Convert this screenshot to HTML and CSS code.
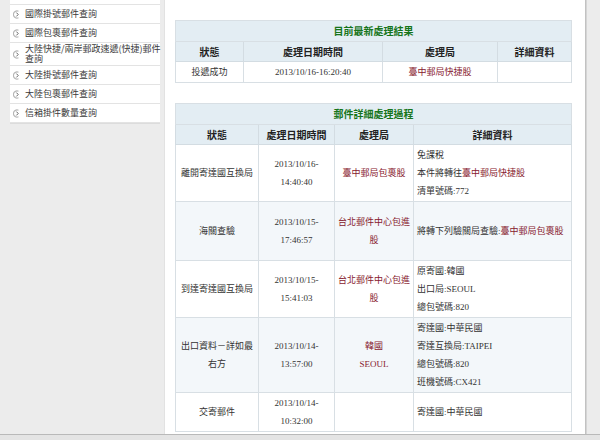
FILE: index.html
```html
<!DOCTYPE html>
<html lang="zh-Hant">
<head>
    <meta charset="UTF-8">
    <title>郵件處理過程查詢</title>
    <link rel="stylesheet" href="styles.css">
</head>
<body>
    <div class="page">
        <div class="side">
            <ul class="menu">
                <li><svg viewBox="0 0 8 9"><path class="ring" d="M5.5 1.2 A3.6 3.6 0 1 0 5.5 7.8"/><path class="tip" d="M3.4 2.6 L5.2 4.5 L3.4 6.4"/></svg><span>國際快捷郵件查詢</span></li>
                <li><svg viewBox="0 0 8 9"><path class="ring" d="M5.5 1.2 A3.6 3.6 0 1 0 5.5 7.8"/><path class="tip" d="M3.4 2.6 L5.2 4.5 L3.4 6.4"/></svg><span>國際掛號郵件查詢</span></li>
                <li><svg viewBox="0 0 8 9"><path class="ring" d="M5.5 1.2 A3.6 3.6 0 1 0 5.5 7.8"/><path class="tip" d="M3.4 2.6 L5.2 4.5 L3.4 6.4"/></svg><span>國際包裹郵件查詢</span></li>
                <li><svg viewBox="0 0 8 9"><path class="ring" d="M5.5 1.2 A3.6 3.6 0 1 0 5.5 7.8"/><path class="tip" d="M3.4 2.6 L5.2 4.5 L3.4 6.4"/></svg><span>大陸快捷/兩岸郵政速遞(快捷)郵件查詢</span></li>
                <li><svg viewBox="0 0 8 9"><path class="ring" d="M5.5 1.2 A3.6 3.6 0 1 0 5.5 7.8"/><path class="tip" d="M3.4 2.6 L5.2 4.5 L3.4 6.4"/></svg><span>大陸掛號郵件查詢</span></li>
                <li><svg viewBox="0 0 8 9"><path class="ring" d="M5.5 1.2 A3.6 3.6 0 1 0 5.5 7.8"/><path class="tip" d="M3.4 2.6 L5.2 4.5 L3.4 6.4"/></svg><span>大陸包裹郵件查詢</span></li>
                <li><svg viewBox="0 0 8 9"><path class="ring" d="M5.5 1.2 A3.6 3.6 0 1 0 5.5 7.8"/><path class="tip" d="M3.4 2.6 L5.2 4.5 L3.4 6.4"/></svg><span>信箱掛件數量查詢</span></li>
            </ul>
        </div>

        <div class="main">
            <table class="track">
                <colgroup>
                    <col style="width: 68px">
                    <col style="width: 139px">
                    <col style="width: 115px">
                    <col style="width: 74px">
                </colgroup>
                <tr><td colspan="4" class="caption">目前最新處理結果</td></tr>
                <tr><th>狀態</th><th>處理日期時間</th><th>處理局</th><th>詳細資料</th></tr>
                <tr>
                    <td>投遞成功</td>
                    <td>2013/10/16-16:20:40</td>
                    <td class="office">臺中郵局快捷股</td>
                    <td></td>
                </tr>
            </table>

            <table class="track history">
                <colgroup>
                    <col style="width: 83px">
                    <col style="width: 76px">
                    <col style="width: 79px">
                    <col style="width: 158px">
                </colgroup>
                <tr><td colspan="4" class="caption">郵件詳細處理過程</td></tr>
                <tr><th>狀態</th><th>處理日期時間</th><th>處理局</th><th>詳細資料</th></tr>
                <tr>
                    <td>離開寄達國互換局</td>
                    <td>2013/10/16-<br>14:40:40</td>
                    <td class="office">臺中郵局包裹股</td>
                    <td class="detail">免課稅<br>本件將轉往<span class="office">臺中郵局快捷股</span><br>清單號碼:772</td>
                </tr>
                <tr class="alt">
                    <td>海關查驗</td>
                    <td>2013/10/15-<br>17:46:57</td>
                    <td class="office">台北郵件中心包進股</td>
                    <td class="detail spaced">將轉下列驗關局查驗:<span class="office">臺中郵局包裹股</span></td>
                </tr>
                <tr>
                    <td>到達寄達國互換局</td>
                    <td>2013/10/15-<br>15:41:03</td>
                    <td class="office">台北郵件中心包進股</td>
                    <td class="detail">原寄國:韓國<br>出口局:SEOUL<br>總包號碼:820</td>
                </tr>
                <tr class="alt">
                    <td>出口資料－詳如最右方</td>
                    <td>2013/10/14-<br>13:57:00</td>
                    <td class="office">韓國<br>SEOUL</td>
                    <td class="detail">寄達國:中華民國<br>寄達互換局:TAIPEI<br>總包號碼:820<br>班機號碼:CX421</td>
                </tr>
                <tr>
                    <td>交寄郵件</td>
                    <td>2013/10/14-<br>10:32:00</td>
                    <td></td>
                    <td class="detail">寄達國:中華民國</td>
                </tr>
            </table>
        </div>
    </div>
</body>
</html>
```

FILE: styles.css
```css
body {
    margin: 0;
    background-color: #e4e4e4;
    font-family: "Liberation Serif", "Noto Sans CJK TC", serif;
    font-size: 9px;
    color: #333;
    overflow: hidden;
}

.page {
    display: flex;
    height: 434px;
    overflow: hidden;
    background-color: #ececec;
    border-bottom: 1px solid #b9b9b9;
}

/* Levé menu */
.side {
    flex: none;
    width: 150px;
    margin-left: 10px;
}

.menu {
    list-style: none;
    margin: -14px 0 0;
    padding: 0;
    background-color: #fff;
    border-bottom: 1px solid #dcdcdc;
}

.menu li {
    display: flex;
    align-items: center;
    box-sizing: border-box;
    min-height: 19px;
    padding: 1px 0;
    border-bottom: 1px solid #e3e3e3;
    font-family: "Noto Sans CJK TC", sans-serif;
    line-height: 10px;
    color: #3a3a3a;
}

.menu span {
    margin-right: -5px; /* text smí dojet až k okraji */
}

.menu svg {
    flex: none;
    width: 8px;
    height: 9px;
    margin: 0 4px 0 3px;
}

.menu .ring {
    fill: none;
    stroke: #b5b5b5;
    stroke-width: 1.1;
}

.menu .tip {
    fill: none;
    stroke: #666;
    stroke-width: 1;
}

/* Obsah */
.main {
    flex: none;
    width: 396px;
    margin-left: 4px;
    padding: 20px 14px 0 10px;
    background-color: #fff;
    border-left: 1px solid #e2e2e2;
    box-shadow: 1px 0 0 #c2c2c2, 2px 0 0 #d5d5d5;
}

.track {
    width: 396px;
    table-layout: fixed;
    border-collapse: collapse;
    border: 1px solid #d3dce2;
}

.history {
    margin-top: 20px;
}

.track td {
    padding: 1px 2px;
    border: 1px solid #d8dfe4;
    text-align: center;
    line-height: 18px;
}

.track th {
    padding: 0;
    border: 1px solid #d3dce2;
    background-color: #e3edf3;
    font-family: "Noto Sans CJK TC", sans-serif;
    font-size: 10px;
    font-weight: bold;
    line-height: 19px;
    color: #222;
}

.track .caption {
    background-color: #e3edf3;
    font-family: "Noto Sans CJK TC", sans-serif;
    font-size: 10px;
    font-weight: bold;
    color: #16751a;
}

.track tr.alt td {
    background-color: #f3f7fa;
}

.track .detail {
    text-align: left;
    padding-left: 3px;
}

.track .spaced {
    padding-top: 20px;
    padding-bottom: 20px;
}

.office {
    color: #87202e;
}
```
